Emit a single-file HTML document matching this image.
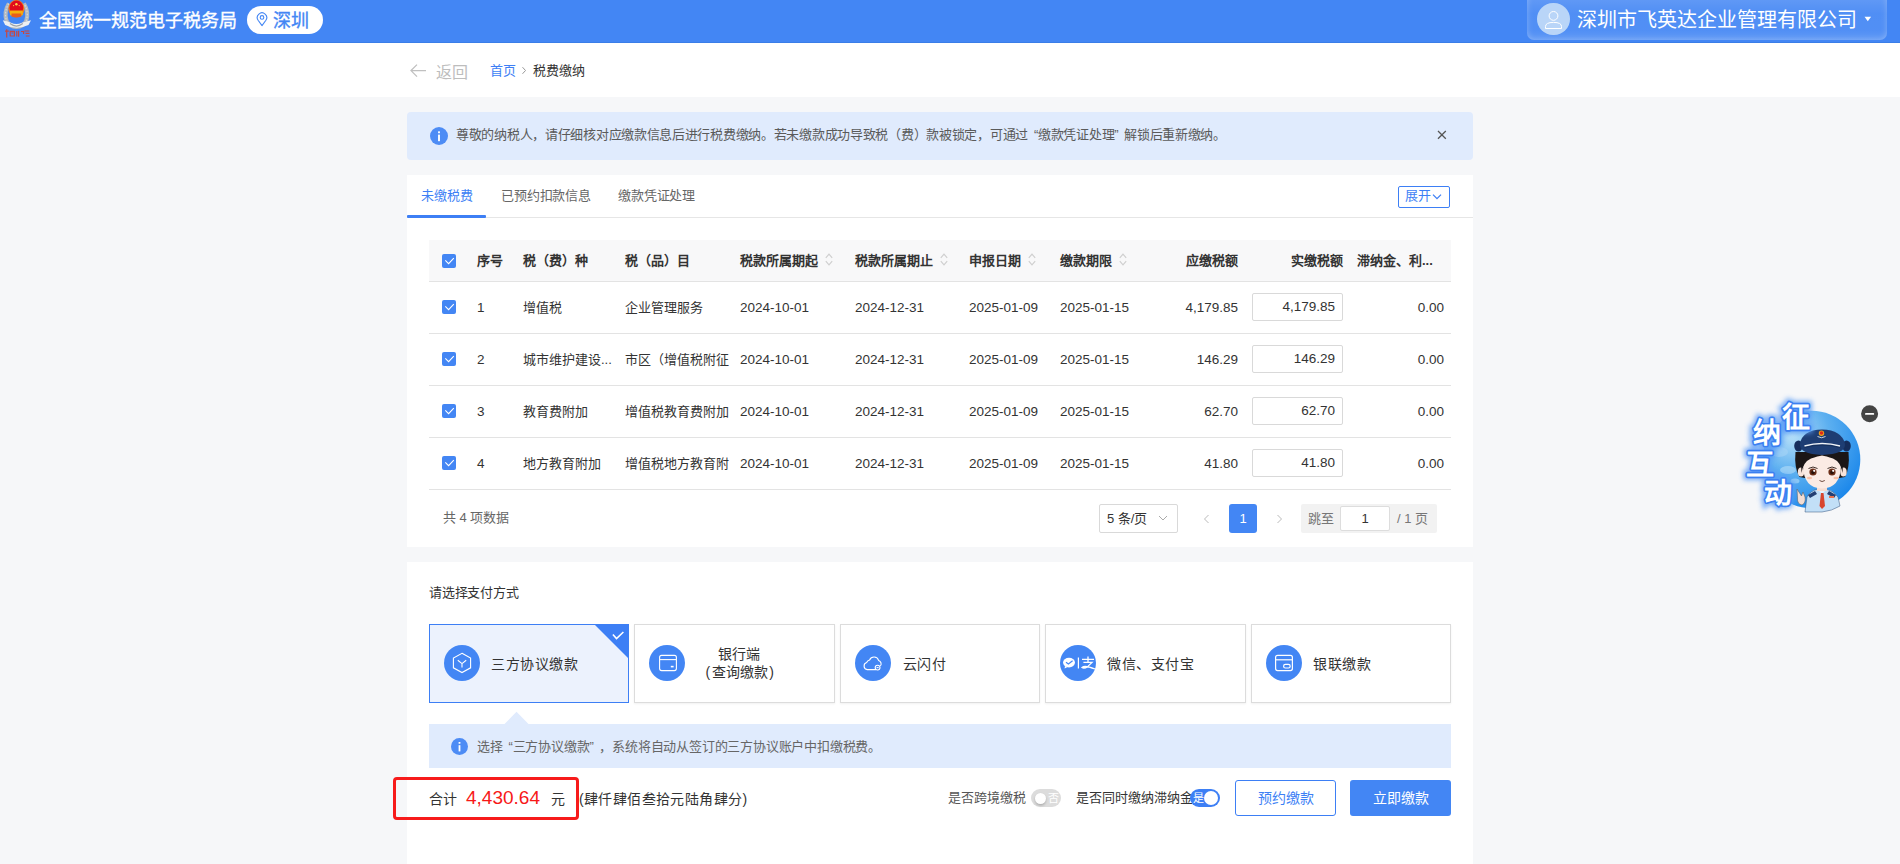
<!DOCTYPE html>
<html lang="zh-CN">
<head>
<meta charset="utf-8">
<style>
*{margin:0;padding:0;box-sizing:border-box}
html,body{width:1900px;height:864px;overflow:hidden;background:#f6f7f9;font-family:"Liberation Sans",sans-serif;color:#333}
.a{position:absolute;white-space:nowrap}
.cb{width:14px;height:14px;border-radius:2px;background:#4386f4}
.th{font-size:13px;line-height:15px;color:#333;font-weight:bold}
.td{font-size:13px;line-height:15px;color:#333}
.num{font-size:13.5px}
.inp{width:91px;height:28px;border:1px solid #d9d9d9;border-radius:2px;background:#fff}
.ic{width:36px;height:36px;border-radius:50%;background:#4386f4}
.q{display:inline-block}
</style>
</head>
<body>
<div class="a" style="left:0;top:0;width:1900px;height:43px;background:#4386f4"></div>
<div class="a" style="left:0;top:42px;width:1900px;height:1px;background:#3a7ee8"></div>
<svg class="a" style="left:0;top:0" width="36" height="40" viewBox="0 0 36 40">
<path d="M8.8 3.5 Q3.6 12 6.6 21 Q9.5 26.5 16.4 27 Q23.3 26.5 26.2 21 Q29.2 12 24 3.5" fill="none" stroke="#b4b9bf" stroke-width="4"/><path d="M8.8 3.5 Q3.6 12 6.6 21 Q9.5 26.5 16.4 27 Q23.3 26.5 26.2 21 Q29.2 12 24 3.5" fill="none" stroke="#d5d8dc" stroke-width="1.2" stroke-dasharray="1.5 1.5"/>
<ellipse cx="16.4" cy="8.6" rx="8.1" ry="8.7" fill="#f07d1e"/>
<ellipse cx="16.4" cy="7.8" rx="6.9" ry="7.3" fill="#e00b1c"/>
<path d="M10 10.5 H22.8 V15 Q16.4 19 10 15Z" fill="#f4b10f"/>
<path d="M11.5 13.5 H21.3 V16.6 Q16.4 18.6 11.5 16.6Z" fill="#e85d1b"/>
<circle cx="16.4" cy="4.2" r="1.2" fill="#ffd54a"/><circle cx="13.6" cy="5.6" r=".6" fill="#ffd54a"/><circle cx="19.2" cy="5.6" r=".6" fill="#ffd54a"/>
<path d="M2.8 20.2 L11 22.8 Q16.4 25.4 21.8 22.8 L31 20.2 L28.5 25 Q16.4 30.5 5.2 25Z" fill="#eceff2"/>
<path d="M10 23.5 Q16.4 28.6 22.8 23.5" fill="none" stroke="#9da2a8" stroke-width="1.2"/>
<path d="M5 31.2h3.8M6.7 29.2v8.3M10.2 31.4h4.2v4.6h-4.2zM11.4 33h2M16.8 31v5.6M18.6 30.8v6M21 31.5h2.6v2.5M24.5 31h4.8M25.5 33.4h4M25.8 36h3.8" stroke="#d8402a" stroke-width="1.2" fill="none" opacity=".88"/>
</svg>
<div class="a" style="left:39px;top:11px;font-size:18px;line-height:20px;color:#fff;-webkit-text-stroke:.35px #fff">全国统一规范电子税务局</div>
<div class="a" style="left:247px;top:5.5px;width:76px;height:28px;border-radius:14px;background:#fff"></div>
<svg class="a" style="left:256px;top:12px" width="12" height="15" viewBox="0 0 12 15">
<path d="M6 13.6 L2.1 8.2 A4.7 4.7 0 1 1 9.9 8.2 Z" fill="none" stroke="#4386f4" stroke-width="1.1" stroke-linejoin="round"/>
<circle cx="6" cy="5.4" r="1.8" fill="none" stroke="#4386f4" stroke-width="1.1"/></svg>
<div class="a" style="left:273px;top:11px;font-size:18px;line-height:20px;color:#4386f4;-webkit-text-stroke:.35px #4386f4">深圳</div>
<div class="a" style="left:1527px;top:-8px;width:360px;height:48px;border-radius:7px;background:linear-gradient(180deg,rgba(255,255,255,.2),rgba(255,255,255,.07) 45%,rgba(255,255,255,.08) 80%,rgba(255,255,255,.16));box-shadow:inset 0 0 6px rgba(255,255,255,.28)"></div>
<div class="a" style="left:1537px;top:2.8px;width:32.6px;height:32.6px;border-radius:50%;background:#b9d5f8"></div>
<svg class="a" style="left:1544px;top:10px" width="19" height="20" viewBox="0 0 19 20">
<circle cx="9.5" cy="5.9" r="4.4" fill="none" stroke="#fff" stroke-width="1"/>
<path d="M1.5 16.5 Q1.5 12.4 9.5 12.4 Q17.5 12.4 17.5 16.5 V18.5 H1.5Z" fill="none" stroke="#fff" stroke-width="1"/></svg>
<div class="a" style="left:1577px;top:9px;font-size:20px;line-height:22px;color:#fff">深圳市飞英达企业管理有限公司</div>
<svg class="a" style="left:1864px;top:16px" width="8" height="6" viewBox="0 0 8 6"><path d="M0.5 0.8H7.1L3.8 5.2Z" fill="#fff"/></svg>
<div class="a" style="left:0;top:43px;width:1900px;height:54px;background:#fff"></div>
<svg class="a" style="left:409px;top:63px" width="18" height="15" viewBox="0 0 18 15"><path d="M17 7.6H2M8 1.6L2 7.6 8 13.6" fill="none" stroke="#c0c0c0" stroke-width="1.3"/></svg>
<div class="a" style="left:436px;top:64px;font-size:16px;line-height:18px;color:#bdbdbd">返回</div>
<div class="a" style="left:490px;top:63px;font-size:13px;line-height:15px;color:#3d7ff5">首页</div>
<svg class="a" style="left:521px;top:66px" width="6" height="9" viewBox="0 0 6 9"><path d="M1.5 1.2L4.5 4.5 1.5 7.8" fill="none" stroke="#999" stroke-width="1"/></svg>
<div class="a" style="left:533px;top:63px;font-size:13px;line-height:15px;color:#333">税费缴纳</div>
<div class="a" style="left:407px;top:112px;width:1066px;height:48px;border-radius:4px;background:#e0ebfd"></div>
<svg class="a" style="left:430px;top:127px" width="18" height="18" viewBox="0 0 18 18"><circle cx="9" cy="9" r="9" fill="#4d8cf5"/><rect x="8.05" y="4.3" width="1.9" height="1.9" rx=".5" fill="#fff"/><rect x="8.05" y="7.6" width="1.9" height="6.6" fill="#fff"/></svg>
<div class="a" style="left:456px;top:127px;font-size:13px;line-height:15px;color:#5a5a5a;letter-spacing:-.29px">尊敬的纳税人，请仔细核对应缴款信息后进行税费缴纳。若未缴款成功导致税（费）款被锁定，可通过<span class="q" style="width:10px;text-align:right">“</span>缴款凭证处理<span class="q" style="width:10px;text-align:left">”</span>解锁后重新缴纳。</div>
<svg class="a" style="left:1437.3px;top:130.3px" width="10" height="10" viewBox="0 0 10 10"><path d="M1 1L8.8 8.8M8.8 1L1 8.8" stroke="#555" stroke-width="1.3"/></svg>
<div class="a" style="left:407px;top:175px;width:1066px;height:372px;background:#fff"></div>
<div class="a" style="left:421px;top:188px;font-size:13px;line-height:15px;color:#3d7ff5">未缴税费</div>
<div class="a" style="left:501px;top:188px;font-size:13px;line-height:15px;color:#666;letter-spacing:-.15px">已预约扣款信息</div>
<div class="a" style="left:618px;top:188px;font-size:13px;line-height:15px;color:#666;letter-spacing:-.15px">缴款凭证处理</div>
<div class="a" style="left:407px;top:217px;width:1066px;height:1px;background:#e6e6e6"></div>
<div class="a" style="left:407px;top:215px;width:79px;height:2.5px;background:#3d7ff5;border-radius:1px"></div>
<div class="a" style="left:1398px;top:186px;width:52px;height:22px;border:1px solid #3d7ff5;border-radius:2px"></div>
<div class="a" style="left:1405px;top:188px;font-size:13px;line-height:15px;color:#3d7ff5">展开</div>
<svg class="a" style="left:1432px;top:193px" width="10" height="8" viewBox="0 0 10 8"><path d="M1 1.6L5 5.6 9 1.6" fill="none" stroke="#3d7ff5" stroke-width="1.3"/></svg>
<div class="a" style="left:429px;top:240px;width:1022px;height:42px;background:#f8f8f9;border-bottom:1px solid #e3e3e3"></div>
<svg class="a" style="left:442px;top:254px" width="14" height="14" viewBox="0 0 14 14"><rect width="14" height="14" rx="2" fill="#4386f4"/><path d="M3.3 6.4L6.6 9.6 11.8 4.2" fill="none" stroke="#fff" stroke-width="1.1"/></svg>
<div class="a th" style="left:477px;top:253px;">序号</div>
<div class="a th" style="left:523px;top:253px;">税（费）种</div>
<div class="a th" style="left:625px;top:253px;">税（品）目</div>
<div class="a th" style="left:740px;top:253px;">税款所属期起</div>
<div class="a th" style="left:855px;top:253px;">税款所属期止</div>
<div class="a th" style="left:969px;top:253px;">申报日期</div>
<div class="a th" style="left:1060px;top:253px;">缴款期限</div>
<div class="a th" style="right:662px;top:253px">应缴税额</div>
<div class="a th" style="right:557px;top:253px">实缴税额</div>
<div class="a th" style="left:1357px;top:253px;">滞纳金、利...</div>
<svg class="a" style="left:825px;top:252px" width="8" height="15" viewBox="0 0 8 15"><path d="M0.8 5.8L4 2.2 7.2 5.8M0.8 9.2L4 12.8 7.2 9.2" fill="none" stroke="#cfcfcf" stroke-width="1.2"/></svg>
<svg class="a" style="left:940px;top:252px" width="8" height="15" viewBox="0 0 8 15"><path d="M0.8 5.8L4 2.2 7.2 5.8M0.8 9.2L4 12.8 7.2 9.2" fill="none" stroke="#cfcfcf" stroke-width="1.2"/></svg>
<svg class="a" style="left:1028px;top:252px" width="8" height="15" viewBox="0 0 8 15"><path d="M0.8 5.8L4 2.2 7.2 5.8M0.8 9.2L4 12.8 7.2 9.2" fill="none" stroke="#cfcfcf" stroke-width="1.2"/></svg>
<svg class="a" style="left:1119px;top:252px" width="8" height="15" viewBox="0 0 8 15"><path d="M0.8 5.8L4 2.2 7.2 5.8M0.8 9.2L4 12.8 7.2 9.2" fill="none" stroke="#cfcfcf" stroke-width="1.2"/></svg>
<div class="a" style="left:429px;top:333px;width:1022px;height:1px;background:#e3e3e3"></div>
<svg class="a" style="left:442px;top:300px" width="14" height="14" viewBox="0 0 14 14"><rect width="14" height="14" rx="2" fill="#4386f4"/><path d="M3.3 6.4L6.6 9.6 11.8 4.2" fill="none" stroke="#fff" stroke-width="1.1"/></svg>
<div class="a td num" style="left:477px;top:300px">1</div>
<div class="a td " style="left:523px;top:300px">增值税</div>
<div class="a td " style="left:625px;top:300px">企业管理服务</div>
<div class="a td num" style="left:740px;top:300px">2024-10-01</div>
<div class="a td num" style="left:855px;top:300px">2024-12-31</div>
<div class="a td num" style="left:969px;top:300px">2025-01-09</div>
<div class="a td num" style="left:1060px;top:300px">2025-01-15</div>
<div class="a td num" style="right:662px;top:300px">4,179.85</div>
<div class="a inp" style="left:1252px;top:293px"></div>
<div class="a td num" style="right:565px;top:299px">4,179.85</div>
<div class="a td num" style="right:456px;top:300px">0.00</div>
<div class="a" style="left:429px;top:385px;width:1022px;height:1px;background:#e3e3e3"></div>
<svg class="a" style="left:442px;top:352px" width="14" height="14" viewBox="0 0 14 14"><rect width="14" height="14" rx="2" fill="#4386f4"/><path d="M3.3 6.4L6.6 9.6 11.8 4.2" fill="none" stroke="#fff" stroke-width="1.1"/></svg>
<div class="a td num" style="left:477px;top:352px">2</div>
<div class="a td " style="left:523px;top:352px">城市维护建设...</div>
<div class="a td " style="left:625px;top:352px">市区（增值税附征</div>
<div class="a td num" style="left:740px;top:352px">2024-10-01</div>
<div class="a td num" style="left:855px;top:352px">2024-12-31</div>
<div class="a td num" style="left:969px;top:352px">2025-01-09</div>
<div class="a td num" style="left:1060px;top:352px">2025-01-15</div>
<div class="a td num" style="right:662px;top:352px">146.29</div>
<div class="a inp" style="left:1252px;top:345px"></div>
<div class="a td num" style="right:565px;top:351px">146.29</div>
<div class="a td num" style="right:456px;top:352px">0.00</div>
<div class="a" style="left:429px;top:437px;width:1022px;height:1px;background:#e3e3e3"></div>
<svg class="a" style="left:442px;top:404px" width="14" height="14" viewBox="0 0 14 14"><rect width="14" height="14" rx="2" fill="#4386f4"/><path d="M3.3 6.4L6.6 9.6 11.8 4.2" fill="none" stroke="#fff" stroke-width="1.1"/></svg>
<div class="a td num" style="left:477px;top:404px">3</div>
<div class="a td " style="left:523px;top:404px">教育费附加</div>
<div class="a td " style="left:625px;top:404px">增值税教育费附加</div>
<div class="a td num" style="left:740px;top:404px">2024-10-01</div>
<div class="a td num" style="left:855px;top:404px">2024-12-31</div>
<div class="a td num" style="left:969px;top:404px">2025-01-09</div>
<div class="a td num" style="left:1060px;top:404px">2025-01-15</div>
<div class="a td num" style="right:662px;top:404px">62.70</div>
<div class="a inp" style="left:1252px;top:397px"></div>
<div class="a td num" style="right:565px;top:403px">62.70</div>
<div class="a td num" style="right:456px;top:404px">0.00</div>
<div class="a" style="left:429px;top:489px;width:1022px;height:1px;background:#e3e3e3"></div>
<svg class="a" style="left:442px;top:456px" width="14" height="14" viewBox="0 0 14 14"><rect width="14" height="14" rx="2" fill="#4386f4"/><path d="M3.3 6.4L6.6 9.6 11.8 4.2" fill="none" stroke="#fff" stroke-width="1.1"/></svg>
<div class="a td num" style="left:477px;top:456px">4</div>
<div class="a td " style="left:523px;top:456px">地方教育附加</div>
<div class="a td " style="left:625px;top:456px">增值税地方教育附</div>
<div class="a td num" style="left:740px;top:456px">2024-10-01</div>
<div class="a td num" style="left:855px;top:456px">2024-12-31</div>
<div class="a td num" style="left:969px;top:456px">2025-01-09</div>
<div class="a td num" style="left:1060px;top:456px">2025-01-15</div>
<div class="a td num" style="right:662px;top:456px">41.80</div>
<div class="a inp" style="left:1252px;top:449px"></div>
<div class="a td num" style="right:565px;top:455px">41.80</div>
<div class="a td num" style="right:456px;top:456px">0.00</div>
<div class="a" style="left:443px;top:510px;font-size:13px;line-height:15px;color:#666">共 4 项数据</div>
<div class="a" style="left:1099px;top:504px;width:79px;height:29px;border:1px solid #d9d9d9;border-radius:2px;background:#fff"></div>
<div class="a" style="left:1107px;top:511px;font-size:13px;line-height:15px;color:#333">5 条/页</div>
<svg class="a" style="left:1158px;top:515px" width="10" height="6" viewBox="0 0 10 6"><path d="M1 1L5 5 9 1" fill="none" stroke="#aaa" stroke-width="1"/></svg>
<svg class="a" style="left:1203px;top:514px" width="7" height="10" viewBox="0 0 7 10"><path d="M5.5 1L1.5 5 5.5 9" fill="none" stroke="#bbb" stroke-width="1"/></svg>
<div class="a" style="left:1229px;top:504px;width:28px;height:29px;border-radius:3px;background:#4386f4"></div>
<div class="a" style="left:1229px;top:511px;width:28px;text-align:center;font-size:13px;line-height:15px;color:#fff">1</div>
<svg class="a" style="left:1276px;top:514px" width="7" height="10" viewBox="0 0 7 10"><path d="M1.5 1L5.5 5 1.5 9" fill="none" stroke="#bbb" stroke-width="1"/></svg>
<div class="a" style="left:1301px;top:504px;width:136px;height:29px;border-radius:2px;background:#f2f2f2"></div>
<div class="a" style="left:1308px;top:511px;font-size:13px;line-height:15px;color:#777">跳至</div>
<div class="a" style="left:1340px;top:506px;width:50px;height:25px;border:1px solid #ddd;border-radius:2px;background:#fff"></div>
<div class="a" style="left:1340px;top:511px;width:50px;text-align:center;font-size:13px;line-height:15px;color:#333">1</div>
<div class="a" style="left:1397px;top:511px;font-size:13px;line-height:15px;color:#777">/ 1 页</div>
<div class="a" style="left:407px;top:562px;width:1066px;height:302px;background:#fff"></div>
<div class="a" style="left:429px;top:585px;font-size:13px;line-height:15px;color:#333;letter-spacing:-.25px">请选择支付方式</div>
<div class="a" style="left:429px;top:624px;width:200px;height:79px;border:1px solid #3d7ff5;background:#ecf2fd"></div>
<div class="a ic" style="left:444px;top:645px"></div>
<div class="a" style="left:634px;top:624px;width:201px;height:79px;border:1px solid #dcdcdc;background:#fff;box-shadow:0 1px 2px rgba(0,0,0,.06)"></div>
<div class="a ic" style="left:649px;top:645px"></div>
<div class="a" style="left:840px;top:624px;width:200px;height:79px;border:1px solid #dcdcdc;background:#fff;box-shadow:0 1px 2px rgba(0,0,0,.06)"></div>
<div class="a ic" style="left:855px;top:645px"></div>
<div class="a" style="left:1045px;top:624px;width:201px;height:79px;border:1px solid #dcdcdc;background:#fff;box-shadow:0 1px 2px rgba(0,0,0,.06)"></div>
<div class="a ic" style="left:1060px;top:645px"></div>
<div class="a" style="left:1251px;top:624px;width:200px;height:79px;border:1px solid #dcdcdc;background:#fff;box-shadow:0 1px 2px rgba(0,0,0,.06)"></div>
<div class="a ic" style="left:1266px;top:645px"></div>
<svg class="a" style="left:444px;top:645px" width="36" height="36" viewBox="0 0 36 36" fill="none" stroke="#fff" stroke-width="1.1">
<path d="M18 8.3 L26.6 13 V22.8 L18 27.5 L9.4 22.8 V13 Z"/><path d="M13.8 15.3 L18 18.6 L22.2 15.3 M18 18.6 V22.6"/></svg>
<svg class="a" style="left:650px;top:645px" width="36" height="36" viewBox="0 0 36 36" fill="none" stroke="#fff" stroke-width="1.1">
<rect x="9.6" y="10.4" width="16.8" height="15.2" rx="2"/><path d="M9.6 14.6 H26.4"/><path d="M20.8 21.6 H23.6" stroke-width="1.6"/></svg>
<svg class="a" style="left:855px;top:645px" width="36" height="36" viewBox="0 0 36 36" fill="none" stroke="#fff" stroke-width="1.1">
<path d="M21 24.6 H12.2 A3.6 3.6 0 0 1 11.6 17.6 A5 5 0 0 1 14.6 15 A4.8 4.8 0 0 1 23.6 15.4 A3.6 3.6 0 0 1 25.4 21"/>
<circle cx="22.6" cy="22.6" r="2.4"/><path d="M21.6 22.6h2"/></svg>
<svg class="a" style="left:1061px;top:645px" width="36" height="36" viewBox="0 0 36 36">
<ellipse cx="8" cy="17.6" rx="6" ry="4.8" fill="#fff"/><path d="M4 21 L3.6 23.6 L6.6 22" fill="#fff"/>
<path d="M5 17.2 L7.4 19 L11.6 15.8" fill="none" stroke="#4386f4" stroke-width="1.2"/>
<path d="M17.4 12.6 V23.6" stroke="#fff" stroke-width="1.2"/>
<path d="M21 14.4 H33 M27 11.6 V17.4 M22.4 17.4 H31 L26.6 21.6 Q23 24 21 22.4 Q24 20 34 24" fill="none" stroke="#fff" stroke-width="1.3"/></svg>
<svg class="a" style="left:1266px;top:645px" width="36" height="36" viewBox="0 0 36 36" fill="none" stroke="#fff" stroke-width="1.2">
<rect x="9.6" y="10.4" width="16.8" height="15.2" rx="2"/><path d="M9.6 14.8 H26.4"/><rect x="17.6" y="19.4" width="6.6" height="3.6" rx="1.8"/></svg>
<div class="a" style="left:491px;top:656px;font-size:14px;line-height:16px;color:#333;letter-spacing:.55px">三方协议缴款</div>
<div class="a" style="left:718px;top:646px;font-size:14px;line-height:16px;color:#333">银行端</div>
<div class="a" style="left:705.5px;top:664px;font-size:14px;line-height:16px;color:#333"><span style="margin-right:1.5px">(</span>查询缴款<span style="margin-left:1.5px">)</span></div>
<div class="a" style="left:903px;top:656px;font-size:14px;line-height:16px;color:#333;letter-spacing:.4px">云闪付</div>
<div class="a" style="left:1107px;top:656px;font-size:14px;line-height:16px;color:#333;letter-spacing:.5px">微信、支付宝</div>
<div class="a" style="left:1313px;top:656px;font-size:14px;line-height:16px;color:#333;letter-spacing:.7px">银联缴款</div>
<svg class="a" style="left:594px;top:624px" width="35" height="35" viewBox="0 0 35 35"><path d="M0 0H35V35Z" fill="#3d7ff5"/><path d="M18.9 10.5L22.5 14.6 29.4 8" fill="none" stroke="#fff" stroke-width="1.6"/></svg>
<svg class="a" style="left:504px;top:711px" width="26" height="14" viewBox="0 0 26 14"><path d="M0 13.5L12.5 0.8 25 13.5Z" fill="#e0ebfd"/></svg>
<div class="a" style="left:429px;top:724px;width:1022px;height:44px;background:#e0ebfd"></div>
<svg class="a" style="left:451px;top:738px" width="17" height="17" viewBox="0 0 18 18"><circle cx="9" cy="9" r="9" fill="#4d8cf5"/><rect x="8.05" y="4.3" width="1.9" height="1.9" rx=".5" fill="#fff"/><rect x="8.05" y="7.6" width="1.9" height="6.6" fill="#fff"/></svg>
<div class="a" style="left:477px;top:739px;font-size:13px;line-height:15px;color:#666;letter-spacing:-.2px">选择<span class="q" style="width:10px;text-align:right">“</span>三方协议缴款<span class="q" style="width:10px;text-align:left">”</span>，系统将自动从签订的三方协议账户中扣缴税费。</div>
<div class="a" style="left:392.5px;top:776.5px;width:186px;height:43px;border:3px solid #f71b1b;border-radius:4px"></div>
<div class="a" style="left:429px;top:791px;font-size:14px;line-height:16px;color:#333">合计</div>
<div class="a" style="left:466px;top:787px;font-size:19px;line-height:21px;color:#f71818">4,430.64</div>
<div class="a" style="left:551px;top:791px;font-size:14px;line-height:16px;color:#333">元</div>
<div class="a" style="left:579px;top:791px;font-size:14px;line-height:16px;color:#333;letter-spacing:.4px">(肆仟肆佰叁拾元陆角肆分)</div>
<div class="a" style="left:948px;top:790px;font-size:13px;line-height:15px;color:#555">是否跨境缴税</div>
<div class="a" style="left:1031px;top:789px;width:30px;height:18px;border-radius:9px;background:#dcdcdc"></div>
<div class="a" style="left:1034.6px;top:792.8px;width:11.4px;height:11.4px;border-radius:50%;background:#fff;box-shadow:0 1.5px 2.5px rgba(0,0,0,.22)"></div>
<div class="a" style="left:1048px;top:792px;font-size:11px;line-height:12px;color:#fff">否</div>
<div class="a" style="left:1076px;top:790px;font-size:13px;line-height:15px;color:#333">是否同时缴纳滞纳金</div>
<div class="a" style="left:1190px;top:789px;width:30px;height:18px;border-radius:9px;background:#3d7ff5"></div>
<div class="a" style="left:1204px;top:791px;width:14px;height:14px;border-radius:50%;background:#fff"></div>
<div class="a" style="left:1193px;top:792px;font-size:11px;line-height:12px;color:#fff">是</div>
<div class="a" style="left:1235px;top:780px;width:101px;height:36px;border:1px solid #3d7ff5;border-radius:3px;background:#fff"></div>
<div class="a" style="left:1235px;top:790px;width:101px;text-align:center;font-size:14px;line-height:16px;color:#3d7ff5">预约缴款</div>
<div class="a" style="left:1350px;top:780px;width:101px;height:36px;border-radius:3px;background:#4386f4"></div>
<div class="a" style="left:1350px;top:790px;width:101px;text-align:center;font-size:14px;line-height:16px;color:#fff">立即缴款</div>
<svg class="a" style="left:1730px;top:390px" width="160" height="130" viewBox="1730 390 160 130">
<defs>
<radialGradient id="bg1" cx="0.3" cy="0.25" r="0.85"><stop offset="0" stop-color="#b8e0f8"/><stop offset=".45" stop-color="#5db0f0"/><stop offset="1" stop-color="#1684ea"/></radialGradient>
<filter id="glow" x="-50%" y="-50%" width="200%" height="200%"><feGaussianBlur stdDeviation="2.4"/></filter>
<clipPath id="cc"><circle cx="1811.5" cy="459.5" r="48.8"/></clipPath>
</defs>
<circle cx="1811.5" cy="459.5" r="48.8" fill="url(#bg1)"/>
<g clip-path="url(#cc)">
<ellipse cx="1779" cy="452" rx="9" ry="5" fill="#a9d6f6" opacity=".55"/>
<ellipse cx="1788" cy="470" rx="8" ry="4" fill="#b5ddf8" opacity=".6"/>
<ellipse cx="1795" cy="481" rx="4.5" ry="2.5" fill="#b5ddf8" opacity=".6"/>
</g>
<!-- shirt -->
<path d="M1805 512 L1807 497 Q1810 491 1818 489 L1826 489 Q1834 491 1838 497 L1840 506 Q1832 511 1822 512Z" fill="#c2dff7" stroke="#33507a" stroke-width=".5"/>
<path d="M1808 495 L1815 491 L1817 494 L1810 498Z M1836 495 L1829 491 L1827 494 L1834 498Z" fill="#243f73"/>
<path d="M1818 490 L1822 494 L1826 490Z" fill="#eaf3fc"/>
<path d="M1821 493 L1823.5 493 L1825 506 L1822 509 L1819.5 506Z" fill="#d8452e"/>
<rect x="1829" y="496" width="5" height="2" fill="#e9734e"/>
<!-- hand -->
<path d="M1797 489 L1801.5 496 L1803 492 L1805 497 Q1806 503 1802 505 Q1797 504 1797.5 498Z" fill="#f3ddd3" stroke="#555" stroke-width=".5"/>
<!-- hair behind -->
<path d="M1795.5 452 Q1794 468 1799.5 477 Q1822 482 1845 477 Q1850 468 1848.5 452 Z" fill="#1b1616"/>
<!-- ears -->
<ellipse cx="1801" cy="472" rx="3.2" ry="4.6" fill="#f8e3da"/>
<ellipse cx="1843.5" cy="472" rx="3.2" ry="4.6" fill="#f8e3da"/>
<!-- neck -->
<rect x="1817" y="484" width="10" height="7" fill="#f5ddd2"/>
<!-- face -->
<path d="M1803 466 Q1803.5 488 1822 488.5 Q1840.5 488 1841 466 Q1838 453 1822 453 Q1806 453 1803 466Z" fill="#fbebe4"/>
<path d="M1801.5 473 Q1799 451 1822 451 Q1845 451 1842.5 473 Q1841 462 1833 458.5 Q1826 456 1822 455.5 Q1818 456 1811 458.5 Q1803 462 1801.5 473Z" fill="#1b1616"/>
<circle cx="1813" cy="472" r="3.6" fill="#6b2e17"/><circle cx="1832" cy="472" r="3.6" fill="#6b2e17"/>
<circle cx="1813" cy="472.4" r="1.8" fill="#2a120a"/><circle cx="1832" cy="472.4" r="1.8" fill="#2a120a"/>
<circle cx="1814.2" cy="470.8" r="1.1" fill="#fff"/><circle cx="1833.2" cy="470.8" r="1.1" fill="#fff"/>
<path d="M1808.5 468.5 Q1813 465.5 1817.5 468.5 M1827.5 468.5 Q1832 465.5 1836.5 468.5" fill="none" stroke="#2a1a14" stroke-width=".9"/>
<ellipse cx="1809.5" cy="478" rx="2.6" ry="1.3" fill="#f7b99c" opacity=".85"/><ellipse cx="1836" cy="478" rx="2.6" ry="1.3" fill="#f7b99c" opacity=".85"/>
<path d="M1819.5 480.5 Q1822 482.6 1824.8 480.5" fill="none" stroke="#4a2418" stroke-width=".8"/>
<!-- hat -->
<ellipse cx="1798.5" cy="446" rx="4.3" ry="5.5" fill="#152d5c"/><ellipse cx="1846.5" cy="446" rx="4.3" ry="5.5" fill="#152d5c"/>
<path d="M1800 444 Q1802 430 1822 429.5 Q1842 430 1845 444 Q1846 454 1822 455 Q1799 454 1800 444Z" fill="#1e3d73"/>
<path d="M1804.5 446 Q1822 441 1840 446" fill="none" stroke="#f2f4f7" stroke-width="1.4"/>
<path d="M1804.5 447.6 Q1822 442.6 1840 447.6" fill="none" stroke="#11264b" stroke-width=".6"/>
<circle cx="1821.5" cy="433.3" r="2.7" fill="#f2a516"/><circle cx="1821.5" cy="433" r="1.8" fill="#e0281b"/>
<path d="M1817.5 436.5 Q1821.5 439 1825.5 436.5" stroke="#dfe6ee" stroke-width=".9" fill="none"/>
<!-- glow text -->
<g font-family="Liberation Sans, sans-serif" font-size="28" font-weight="bold">
<g fill="#5a9cf6" stroke="#5a9cf6" stroke-width="7" filter="url(#glow)" opacity=".85">
<text x="1781.5" y="427">征</text><text x="1752.5" y="443">纳</text><text x="1745.5" y="475">互</text><text x="1764" y="503">动</text></g>
<g fill="#fff" stroke="#3b80f1" stroke-width="3.4" stroke-linejoin="round">
<text x="1781.5" y="427">征</text><text x="1752.5" y="443">纳</text><text x="1745.5" y="475">互</text><text x="1764" y="503">动</text></g>
<g fill="#fff">
<text x="1781.5" y="427">征</text><text x="1752.5" y="443">纳</text><text x="1745.5" y="475">互</text><text x="1764" y="503">动</text></g>
</g>
<circle cx="1869.6" cy="413.8" r="8.5" fill="#444"/><rect x="1865" y="413" width="9.2" height="1.8" rx=".9" fill="#fff"/>
</svg>
</body>
</html>
